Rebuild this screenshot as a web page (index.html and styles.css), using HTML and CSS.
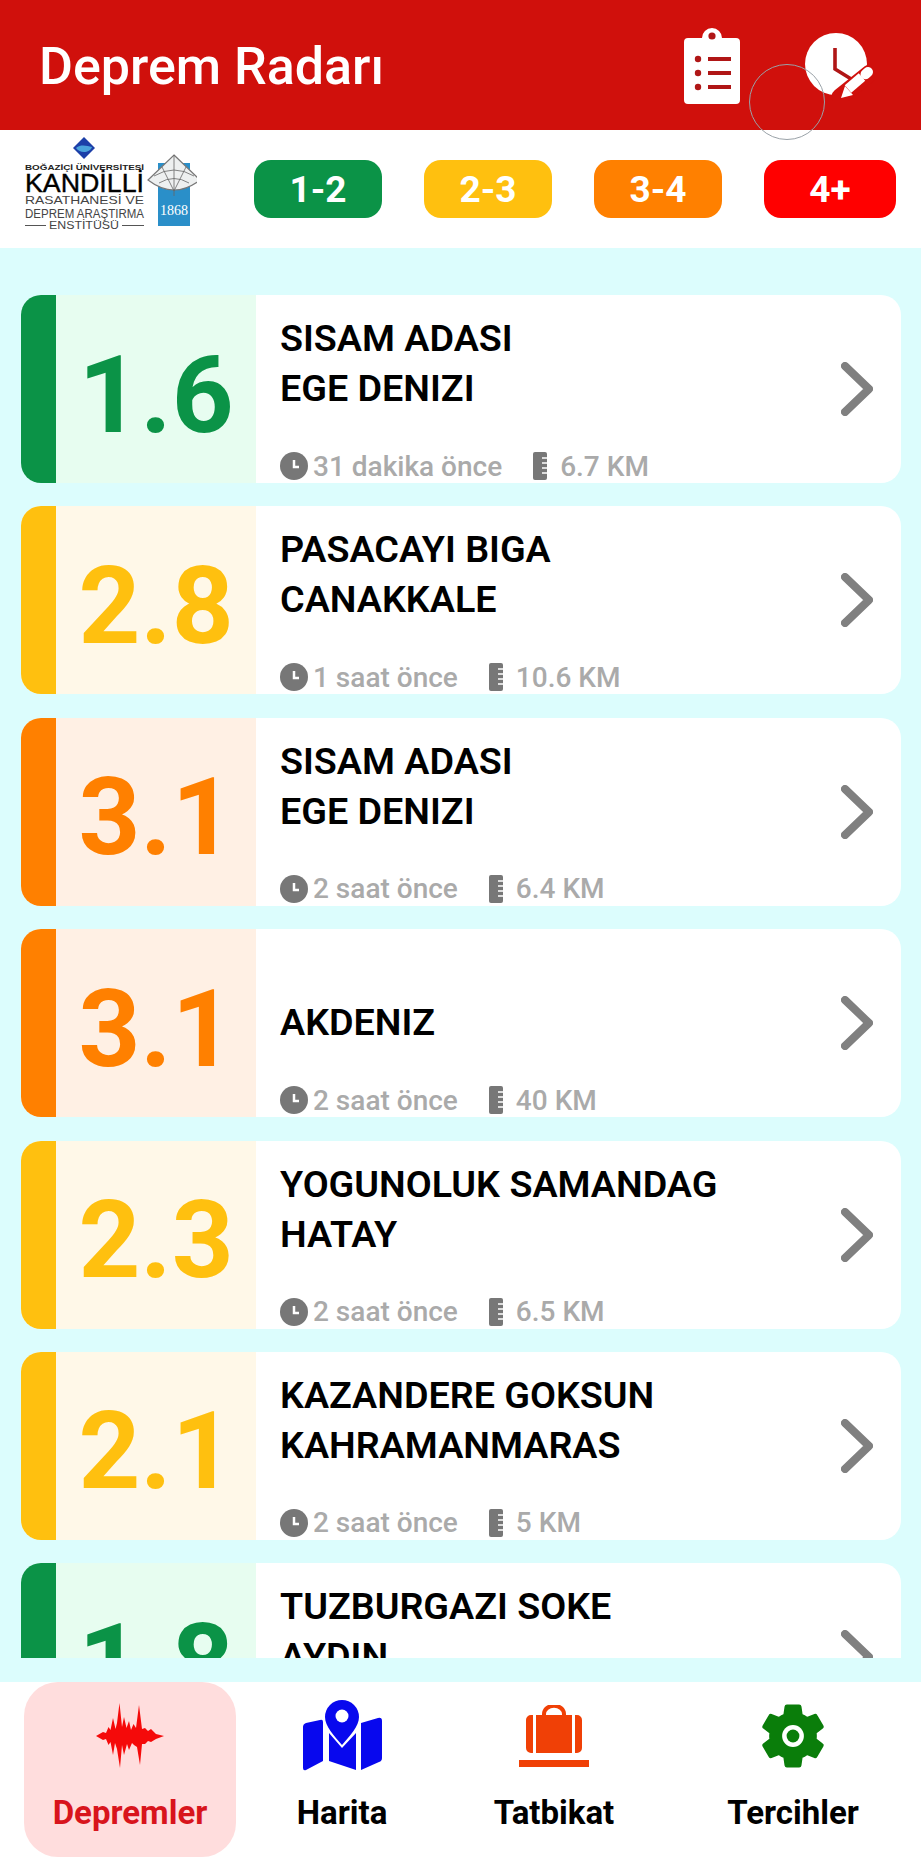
FILE: index.html
```html
<!DOCTYPE html>
<html lang="tr">
<head>
<meta charset="utf-8">
<title>Deprem Radarı</title>
<link rel="stylesheet" href="styles.css">
</head>
<body>
<div class="app">
  <header class="topbar">
    <h1 class="app-title">Deprem Radarı</h1>
    <div class="top-actions">
      <svg class="icon-clipboard" viewBox="0 0 56 77">
        <path fill="#fff" d="M4 11h14a10 10 0 0 1 20 0h14a4 4 0 0 1 4 4v58a4 4 0 0 1-4 4H4a4 4 0 0 1-4-4V15a4 4 0 0 1 4-4z"/>
        <circle cx="28" cy="9" r="3.6" fill="#b01616"/>
        <g fill="#b01616">
          <circle cx="14" cy="32" r="3.2"/><circle cx="14" cy="46" r="3.2"/><circle cx="14" cy="60" r="3.2"/>
          <rect x="24" y="30" width="23" height="4"/><rect x="24" y="44" width="23" height="4"/><rect x="24" y="58" width="23" height="4"/>
        </g>
      </svg>
      <svg class="icon-history" viewBox="0 0 75 72">
        <circle cx="36" cy="35" r="31" fill="#fff"/>
        <path d="M35 19V40L56 53" fill="none" stroke="#b01616" stroke-width="3.6"/>
        <path d="M40 68L70 44" stroke="#d0100c" stroke-width="17" stroke-linecap="round"/>
        <path d="M41 69l4-12 8 9z" fill="#fff"/>
        <path d="M48 60L62 48" stroke="#fff" stroke-width="10"/>
        <path d="M65.500 45.200L68 43" stroke="#fff" stroke-width="10" stroke-linecap="round"/>
      </svg>
    </div>
    <span class="touch-ring"></span>
  </header>

  <section class="filters">
    <svg class="logo" viewBox="0 0 175 110">
      <path d="M62 3L73 14 62 25 51 14z" fill="#1c3fa8"/>
      <path d="M54 14c5-4 11-2 16-1-2 6-12 7-16 1z" fill="#4ba3dc"/>
      <text class="logo-t logo-b" x="3" y="36" textLength="119" lengthAdjust="spacingAndGlyphs">BOĞAZİÇİ ÜNİVERSİTESİ</text>
      <text class="logo-t logo-k" x="3" y="58" textLength="119" lengthAdjust="spacingAndGlyphs">KANDİLLİ</text>
      <text class="logo-t logo-r" x="3" y="70" textLength="119" lengthAdjust="spacingAndGlyphs">RASATHANESİ VE</text>
      <text class="logo-t logo-d" x="3" y="84" textLength="119" lengthAdjust="spacingAndGlyphs">DEPREM ARAŞTIRMA</text>
      <text class="logo-t logo-e" x="27" y="95" textLength="70" lengthAdjust="spacingAndGlyphs">ENSTİTÜSÜ</text>
      <path d="M3 91.500H24M100 91.500H122" stroke="#555" stroke-width="1"/>
      <rect x="136" y="29" width="32" height="63" fill="#2a8fc9"/>
      <path d="M152 21L178 46Q152 66 126 46z" fill="#eef0f0" stroke="#777" stroke-width="1.200"/>
      <path d="M152 21V62M140 33L152 57M164 33L152 57M132 42Q152 30 172 42M137 49Q152 40 167 49" fill="none" stroke="#666" stroke-width="0.800"/>
      <text class="logo-year" x="152" y="81" text-anchor="middle">1868</text>
    </svg>
    <div class="chips">
      <span class="chip chip-green">1-2</span>
      <span class="chip chip-yellow">2-3</span>
      <span class="chip chip-orange">3-4</span>
      <span class="chip chip-red">4+</span>
    </div>
  </section>

  <main class="content">
    <div class="list">

      <article class="card green">
        <div class="strip"></div>
        <div class="mag">1.6</div>
        <div class="info">
          <div class="place"><div>SISAM ADASI<br>EGE DENIZI</div></div>
          <div class="meta">
            <svg class="m-clock" viewBox="0 0 28 28"><circle cx="14" cy="14" r="14"/><path d="M14 8v7h5"/></svg>
            <span class="m-time">31 dakika önce</span>
            <svg class="m-ruler" viewBox="0 0 14 28"><rect width="14" height="28" rx="2"/><path d="M14 6H9M14 11H9M14 16H9M14 21H9"/></svg>
            <span>6.7 KM</span>
          </div>
        </div>
        <svg class="chev" viewBox="0 0 32 54"><path d="M4 4L28 27 4 50"/></svg>
      </article>

      <article class="card yellow">
        <div class="strip"></div>
        <div class="mag">2.8</div>
        <div class="info">
          <div class="place"><div>PASACAYI BIGA<br>CANAKKALE</div></div>
          <div class="meta">
            <svg class="m-clock" viewBox="0 0 28 28"><circle cx="14" cy="14" r="14"/><path d="M14 8v7h5"/></svg>
            <span class="m-time">1 saat önce</span>
            <svg class="m-ruler" viewBox="0 0 14 28"><rect width="14" height="28" rx="2"/><path d="M14 6H9M14 11H9M14 16H9M14 21H9"/></svg>
            <span>10.6 KM</span>
          </div>
        </div>
        <svg class="chev" viewBox="0 0 32 54"><path d="M4 4L28 27 4 50"/></svg>
      </article>

      <article class="card orange">
        <div class="strip"></div>
        <div class="mag">3.1</div>
        <div class="info">
          <div class="place"><div>SISAM ADASI<br>EGE DENIZI</div></div>
          <div class="meta">
            <svg class="m-clock" viewBox="0 0 28 28"><circle cx="14" cy="14" r="14"/><path d="M14 8v7h5"/></svg>
            <span class="m-time">2 saat önce</span>
            <svg class="m-ruler" viewBox="0 0 14 28"><rect width="14" height="28" rx="2"/><path d="M14 6H9M14 11H9M14 16H9M14 21H9"/></svg>
            <span>6.4 KM</span>
          </div>
        </div>
        <svg class="chev" viewBox="0 0 32 54"><path d="M4 4L28 27 4 50"/></svg>
      </article>

      <article class="card orange">
        <div class="strip"></div>
        <div class="mag">3.1</div>
        <div class="info">
          <div class="place"><div>AKDENIZ</div></div>
          <div class="meta">
            <svg class="m-clock" viewBox="0 0 28 28"><circle cx="14" cy="14" r="14"/><path d="M14 8v7h5"/></svg>
            <span class="m-time">2 saat önce</span>
            <svg class="m-ruler" viewBox="0 0 14 28"><rect width="14" height="28" rx="2"/><path d="M14 6H9M14 11H9M14 16H9M14 21H9"/></svg>
            <span>40 KM</span>
          </div>
        </div>
        <svg class="chev" viewBox="0 0 32 54"><path d="M4 4L28 27 4 50"/></svg>
      </article>

      <article class="card yellow">
        <div class="strip"></div>
        <div class="mag">2.3</div>
        <div class="info">
          <div class="place"><div>YOGUNOLUK SAMANDAG<br>HATAY</div></div>
          <div class="meta">
            <svg class="m-clock" viewBox="0 0 28 28"><circle cx="14" cy="14" r="14"/><path d="M14 8v7h5"/></svg>
            <span class="m-time">2 saat önce</span>
            <svg class="m-ruler" viewBox="0 0 14 28"><rect width="14" height="28" rx="2"/><path d="M14 6H9M14 11H9M14 16H9M14 21H9"/></svg>
            <span>6.5 KM</span>
          </div>
        </div>
        <svg class="chev" viewBox="0 0 32 54"><path d="M4 4L28 27 4 50"/></svg>
      </article>

      <article class="card yellow">
        <div class="strip"></div>
        <div class="mag">2.1</div>
        <div class="info">
          <div class="place"><div>KAZANDERE GOKSUN<br>KAHRAMANMARAS</div></div>
          <div class="meta">
            <svg class="m-clock" viewBox="0 0 28 28"><circle cx="14" cy="14" r="14"/><path d="M14 8v7h5"/></svg>
            <span class="m-time">2 saat önce</span>
            <svg class="m-ruler" viewBox="0 0 14 28"><rect width="14" height="28" rx="2"/><path d="M14 6H9M14 11H9M14 16H9M14 21H9"/></svg>
            <span>5 KM</span>
          </div>
        </div>
        <svg class="chev" viewBox="0 0 32 54"><path d="M4 4L28 27 4 50"/></svg>
      </article>

      <article class="card green">
        <div class="strip"></div>
        <div class="mag">1.8</div>
        <div class="info">
          <div class="place"><div>TUZBURGAZI SOKE<br>AYDIN</div></div>
        </div>
        <svg class="chev" viewBox="0 0 32 54"><path d="M4 4L28 27 4 50"/></svg>
      </article>

    </div>
  </main>

  <nav class="tabs">
    <div class="tab active">
      <div class="tab-icon">
        <svg class="i-wave" viewBox="0 0 68 66"><path d="M0 33L7 29 10 30 12.500 24 14.500 27 17 15 19.500 26 21 20 23.500 0 26 24 28 14 30.500 25 33 18 35 27 37.500 21 40 25 43 2 46 26 49 25 52 28 55 26 60 31 68 33 60 36 55 39 52 38 49 41 46 41 44 62 41 44 38 42 36 40 33 47 31 41 28 52 26 42 24 65 21 46 19 40 17 52 14.500 39 12.500 42 10 36 7 37z"/></svg>
      </div>
      <span class="tab-label">Depremler</span>
    </div>
    <div class="tab">
      <div class="tab-icon">
        <svg class="i-map" viewBox="0 0 80 72">
          <path fill="#0808ee" d="M1 27q0-3 3-4L18 20q3-1 3 2V61L4 70q-3 1-3-2z"/>
          <path fill="#0808ee" d="M27 33L40 48 54 33V70L27 61z"/>
          <path fill="#0808ee" d="M59 23L76 18q4-1 4 3V58q0 3-3 4L59 70z"/>
          <path fill="#0808ee" d="M40 0a17 17 0 0 1 17 17c0 9-9 19-17 28-8-9-17-19-17-28A17 17 0 0 1 40 0z"/>
          <circle cx="40" cy="16" r="6.500" fill="#fff"/>
        </svg>
      </div>
      <span class="tab-label">Harita</span>
    </div>
    <div class="tab">
      <div class="tab-icon">
        <svg class="i-bag" viewBox="0 0 70 62">
          <path d="M25 11V9a9 7.500 0 0 1 20 0v2" fill="none" stroke="#f04006" stroke-width="4"/>
          <path fill="#f04006" d="M14 10V48H12a5 5 0 0 1-5-5V15a5 5 0 0 1 5-5zM17 10H53V48H17zM56 10h2a5 5 0 0 1 5 5V43a5 5 0 0 1-5 5H56z"/>
          <rect y="55" width="70" height="7" fill="#f04006"/>
        </svg>
      </div>
      <span class="tab-label">Tatbikat</span>
    </div>
    <div class="tab last">
      <div class="tab-icon">
        <svg class="i-gear" viewBox="2 2 20 20">
          <path fill="#0a7d0a" stroke="#0a7d0a" stroke-width="0.500" d="M19.140 12.940c.04-.3.06-.61.06-.94 0-.32-.02-.64-.07-.94l2.030-1.580c.18-.14.23-.41.12-.61l-1.920-3.320c-.12-.22-.37-.29-.59-.22l-2.390.96c-.5-.38-1.030-.7-1.620-.94l-.36-2.540c-.04-.24-.24-.41-.48-.41h-3.840c-.24 0-.43.17-.47.41l-.36 2.540c-.59.24-1.130.57-1.620.94l-2.390-.96c-.22-.08-.47 0-.59.22L2.740 8.870c-.12.21-.08.47.12.61l2.030 1.580c-.05.3-.09.63-.09.94s.02.64.07.94l-2.030 1.580c-.18.14-.23.41-.12.61l1.920 3.320c.12.22.37.29.59.22l2.390-.96c.5.38 1.030.7 1.620.94l.36 2.540c.05.24.24.41.48.41h3.840c.24 0 .44-.17.47-.41l.36-2.540c.59-.24 1.130-.56 1.620-.94l2.390.96c.22.08.47 0 .59-.22l1.920-3.320c.12-.22.07-.47-.12-.61l-2.010-1.580z"/>
          <circle cx="12" cy="12" r="3.400" fill="#fff"/>
          <circle cx="12" cy="12" r="2" fill="#0a7d0a"/>
        </svg>
      </div>
      <span class="tab-label">Tercihler</span>
    </div>
  </nav>
</div>
</body>
</html>
```

FILE: styles.css
```css
* { box-sizing: border-box; }

html, body {
  margin: 0;
  padding: 0;
  background: #fff;
}

body {
  font-family: Roboto, "Liberation Sans", sans-serif;
  color: #000;
}

.app {
  width: 921px;
  height: 1867px;
  display: flex;
  flex-direction: column;
  overflow: hidden;
}

/* Header */
.topbar {
  position: relative;
  flex: 0 0 130px;
  display: flex;
  align-items: center;
  padding: 0 46px 0 39px;
  background: #d0100c;
}

.app-title {
  margin: 0;
  padding-top: 4px;
  font-size: 52px;
  font-weight: 500;
  line-height: 1;
  color: #fff;
}

.top-actions {
  margin-left: auto;
  display: flex;
  align-items: center;
  gap: 60px;
}

.icon-clipboard { width: 56px; height: 77px; display: block; }
.icon-history { width: 75px; height: 72px; display: block; }

.touch-ring {
  position: absolute;
  left: 749px;
  top: 64px;
  width: 76px;
  height: 76px;
  border: 1px solid #9aa2a8;
  border-radius: 50%;
}

/* Filter row */
.filters {
  flex: 0 0 118px;
  display: flex;
  align-items: center;
  padding-left: 22px;
  background: #fff;
}

.logo { width: 175px; height: 110px; display: block; flex: none; }

.logo-t { font-family: "Liberation Sans", sans-serif; fill: #222; }
.logo-b { font-size: 8px; font-weight: 700; }
.logo-k { font-size: 26px; fill: #000; stroke: #000; stroke-width: 0.400; }
.logo-r { font-size: 11px; fill: #444; }
.logo-d { font-size: 12px; fill: #444; }
.logo-e { font-size: 10px; fill: #444; }
.logo-year { font-family: "Liberation Serif", serif; font-size: 14px; fill: #fff; }

.chips {
  margin-left: 57px;
  display: flex;
  gap: 42px;
}

.chip {
  width: 128px;
  height: 58px;
  display: flex;
  align-items: center;
  justify-content: center;
  border-radius: 17px;
  font-size: 37px;
  font-weight: 700;
  color: #fff;
}

.chip-green { background: #0b9347; }
.chip-yellow { background: #ffc00f; }
.chip-orange { background: #ff8000; }
.chip-red { background: #ff0000; width: 132px; }

/* List */
.content {
  flex: 1;
  min-height: 0;
  display: flex;
  flex-direction: column;
  padding-bottom: 24px;
  background: #dcfdfd;
}

.list {
  flex: 1;
  min-height: 0;
  overflow: hidden;
  display: flex;
  flex-direction: column;
  gap: 23.400px;
  padding: 47px 20px 0 21px;
}

.card {
  flex: 0 0 188px;
  display: flex;
  overflow: hidden;
  background: #fff;
  border-radius: 20px;
}

.strip { flex: 0 0 35px; }

.mag {
  flex: 0 0 200px;
  display: flex;
  align-items: center;
  justify-content: center;
  padding-top: 11px;
  font-size: 108px;
  font-weight: 700;
  line-height: 1;
}

.green .strip { background: #0b9347; }
.green .mag { background: #e7fdf0; color: #0b9347; }
.yellow .strip { background: #ffc00f; }
.yellow .mag { background: #fff8e8; color: #ffc00f; }
.orange .strip { background: #ff8000; }
.orange .mag { background: #fff0e4; color: #ff8000; }

.info {
  flex: 1;
  min-width: 0;
  padding: 18px 0 0 24px;
}

.place {
  height: 100px;
  display: flex;
  align-items: flex-end;
  font-size: 37.700px;
  font-weight: 600;
  line-height: 50px;
}

.meta {
  margin-top: 39px;
  display: flex;
  align-items: center;
  height: 28px;
  font-size: 28px;
  font-weight: 500;
  color: #aaa;
}

.m-clock { width: 28px; height: 28px; flex: none; margin-right: 5px; }
.m-clock circle { fill: #777; }
.m-clock path { fill: none; stroke: #fff; stroke-width: 2.500; }

.m-time { margin-right: 31px; }

.m-ruler { width: 14px; height: 28px; flex: none; margin-right: 13px; }
.m-ruler rect { fill: #777; }
.m-ruler path { stroke: #fff; stroke-width: 1.500; }

.chev {
  flex: none;
  align-self: center;
  width: 32px;
  height: 54px;
  margin-right: 28px;
}

.chev path {
  fill: none;
  stroke: #808080;
  stroke-width: 8;
  stroke-linecap: round;
  stroke-linejoin: round;
}

/* Bottom tabs */
.tabs {
  flex: 0 0 185px;
  display: flex;
  padding: 0 0 10px 24px;
  background: #fff;
}

.tab {
  flex: 0 0 212px;
  display: flex;
  flex-direction: column;
  align-items: center;
  padding-top: 18px;
  border-radius: 34px;
}

.tab.last { margin-left: 27px; }
.tab.active { background: #ffdddd; }

.tab-icon {
  height: 72px;
  display: flex;
  align-items: center;
  justify-content: center;
}

.tab-label {
  margin-top: 21px;
  font-size: 33px;
  font-weight: 700;
  line-height: 40px;
}

.tab.active .tab-label { color: #d8141c; }

.i-wave { width: 68px; height: 66px; display: block; fill: #f50a0a; }
.i-map { width: 80px; height: 72px; display: block; }
.i-bag { width: 70px; height: 62px; display: block; }
.i-gear { width: 64px; height: 64px; display: block; }
```
